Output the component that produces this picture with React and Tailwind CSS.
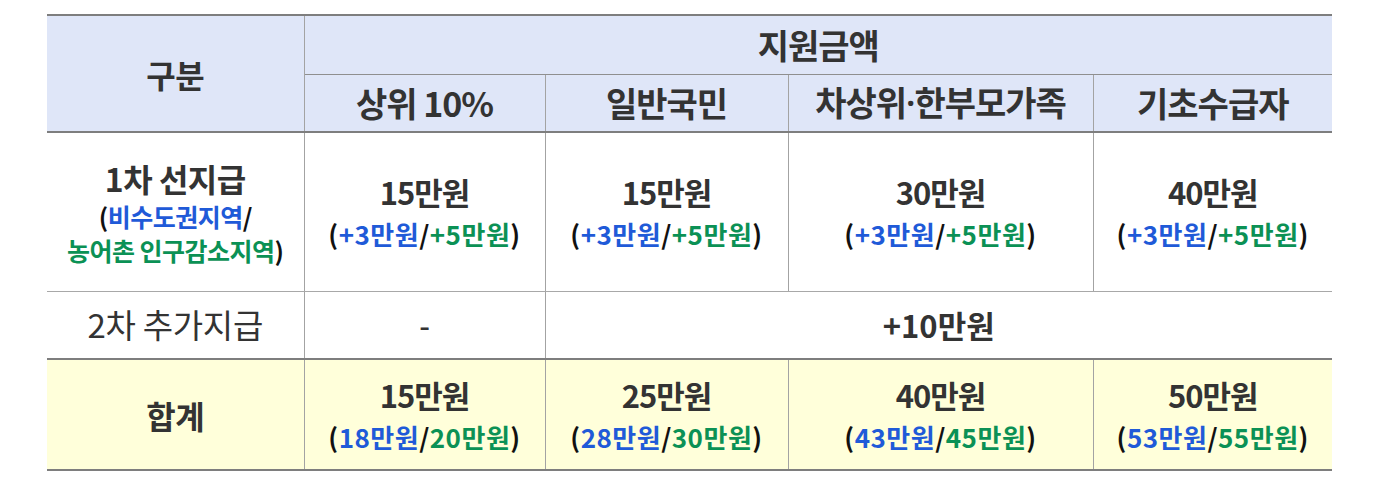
import React from "react";

const B = ({ children }) => <span className="text-[#1f5ad8]">{children}</span>;
const G = ({ children }) => <span className="text-[#0b9155]">{children}</span>;

function Val({ main, a, b }) {
  return (
    <div className="flex flex-col items-center">
      <div className="text-[31px] font-semibold leading-[44px] tracking-[-1px] text-[#333]">{main}</div>
      <div className="text-[26px] font-bold leading-[40px] tracking-[0.5px] text-[#111]">
        (<B>{a}</B>/<G>{b}</G>)
      </div>
    </div>
  );
}

export default function App() {
  const hdr = "bg-[#dfe6f8] text-[#333] font-semibold text-[34px] tracking-[-1px] text-center align-middle";
  return (
    <div className="w-[1385px] h-[487px] bg-white pt-[14px] pl-[47px]" style={{ fontFamily: '"Noto Sans CJK KR", "Noto Sans", sans-serif' }}>
      <table className="border-collapse table-fixed w-[1285px]">
        <colgroup>
          <col className="w-[257px]" />
          <col className="w-[241px]" />
          <col className="w-[243px]" />
          <col className="w-[305px]" />
          <col className="w-[239px]" />
        </colgroup>
        <tbody>
          <tr className="h-[59px]">
            <td rowSpan={2} className={`${hdr} !text-[32px] !tracking-[-0.5px] font-bold border-t-2 border-t-[#7e7e7e] border-b-2 border-b-[#7e7e7e] border-r border-r-[#a3a3a3]`}>구분</td>
            <td colSpan={4} className={`${hdr} border-t-2 border-t-[#7e7e7e] border-b border-b-[#8f8f8f]`}>지원금액</td>
          </tr>
          <tr className="h-[58px]">
            <td className={`${hdr} border-b-2 border-b-[#7e7e7e] border-r border-r-[#a3a3a3]`}>상위 10%</td>
            <td className={`${hdr} border-b-2 border-b-[#7e7e7e] border-r border-r-[#a3a3a3]`}>일반국민</td>
            <td className={`${hdr} border-b-2 border-b-[#7e7e7e] border-r border-r-[#a3a3a3]`}>
              차상위<span style={{ fontFamily: '"Noto Sans", sans-serif' }}>·</span>한부모가족
            </td>
            <td className={`${hdr} border-b-2 border-b-[#7e7e7e]`}>기초수급자</td>
          </tr>
          <tr className="h-[159px]">
            <td className="text-center align-middle border-b border-b-[#a8a8a8] border-r border-r-[#a3a3a3]">
              <div className="flex flex-col items-center">
                <div className="text-[32px] font-semibold leading-[42px] tracking-[-0.5px] text-[#333]">1차 선지급</div>
                <div className="text-[25px] font-bold leading-[34px] tracking-[-0.5px] text-[#111]">(<B>비수도권지역</B>/</div>
                <div className="text-[25px] font-bold leading-[34px] tracking-[-0.5px] text-[#111]"><G>농어촌 인구감소지역</G>)</div>
              </div>
            </td>
            <td className="text-center align-middle border-b border-b-[#a8a8a8] border-r border-r-[#a3a3a3]"><Val main="15만원" a="+3만원" b="+5만원" /></td>
            <td className="text-center align-middle border-b border-b-[#a8a8a8] border-r border-r-[#a3a3a3]"><Val main="15만원" a="+3만원" b="+5만원" /></td>
            <td className="text-center align-middle border-b border-b-[#a8a8a8] border-r border-r-[#a3a3a3]"><Val main="30만원" a="+3만원" b="+5만원" /></td>
            <td className="text-center align-middle border-b border-b-[#a8a8a8]"><Val main="40만원" a="+3만원" b="+5만원" /></td>
          </tr>
          <tr className="h-[68px]">
            <td className="text-center align-middle border-b-2 border-b-[#7e7e7e] border-r border-r-[#a3a3a3] text-[33px] font-normal tracking-[-0.3px] text-[#333]">2차 추가지급</td>
            <td className="text-center align-middle border-b-2 border-b-[#7e7e7e] border-r border-r-[#a3a3a3] text-[30px] font-medium text-[#333]">-</td>
            <td colSpan={3} className="text-center align-middle border-b-2 border-b-[#7e7e7e] text-[31px] font-semibold tracking-[0px] text-[#333]">+10만원</td>
          </tr>
          <tr className="h-[111px] bg-[#ffffda]">
            <td className="text-center align-middle border-b-2 border-b-[#7e7e7e] border-r border-r-[#a3a3a3] text-[32px] font-bold tracking-[-0.5px] text-[#333]">합계</td>
            <td className="text-center align-middle border-b-2 border-b-[#7e7e7e] border-r border-r-[#a3a3a3]"><Val main="15만원" a="18만원" b="20만원" /></td>
            <td className="text-center align-middle border-b-2 border-b-[#7e7e7e] border-r border-r-[#a3a3a3]"><Val main="25만원" a="28만원" b="30만원" /></td>
            <td className="text-center align-middle border-b-2 border-b-[#7e7e7e] border-r border-r-[#a3a3a3]"><Val main="40만원" a="43만원" b="45만원" /></td>
            <td className="text-center align-middle border-b-2 border-b-[#7e7e7e]"><Val main="50만원" a="53만원" b="55만원" /></td>
          </tr>
        </tbody>
      </table>
    </div>
  );
}
